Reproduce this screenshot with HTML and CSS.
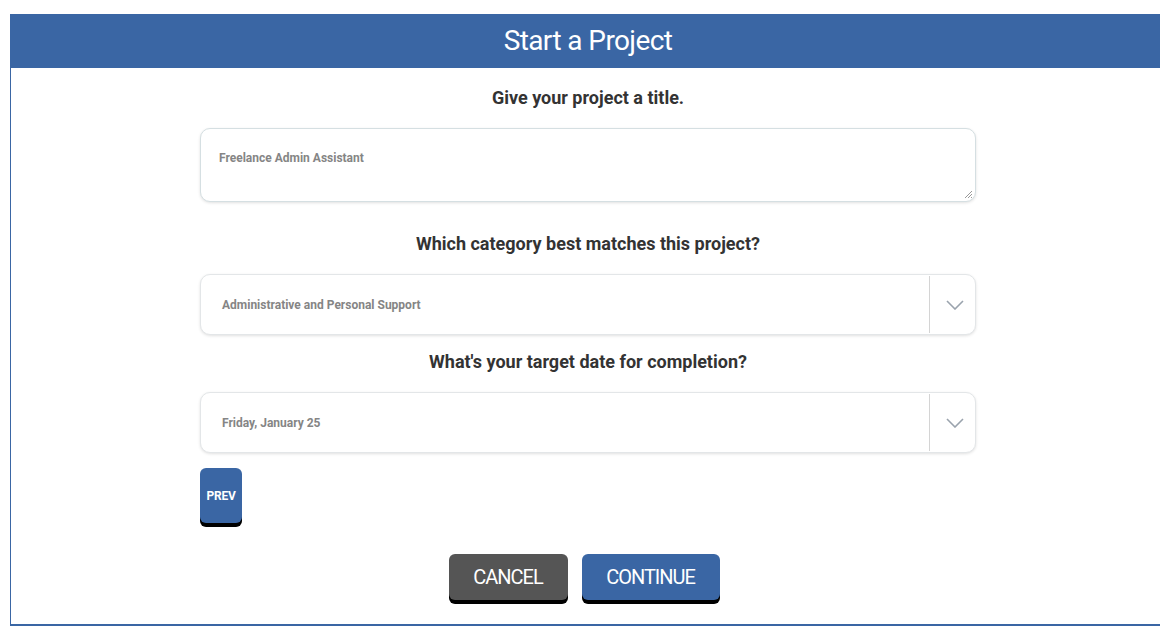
FILE: index.html
```html
<!DOCTYPE html>
<html lang="en">
<head>
<title>Start a Project</title>
<meta charset="utf-8">
<link rel="stylesheet" href="styles.css">
</head>
<body>
	<div class="card">
		<h1 class="card_head">Start a Project</h1>

		<form class="project_form">
			<label class="q">Give your project a title.</label>
			<div class="field area">
				<span class="val">Freelance Admin Assistant</span>
				<svg class="grip" width="10" height="10" viewBox="0 0 10 10">
					<path d="M9 2 L2 9 M9 5 L5 9 M9 8 L8 9" stroke="#999" stroke-width="1" fill="none"/>
				</svg>
			</div>

			<label class="q">Which category best matches this project?</label>
			<div class="field pick">
				<span class="val">Administrative and Personal Support</span>
				<span class="arrow">
					<svg width="18" height="10" viewBox="0 0 18 10"><path d="M1 1 L9 9 L17 1" stroke="#9aa3ad" stroke-width="1.6" fill="none"/></svg>
				</span>
			</div>

			<label class="q">What's your target date for completion?</label>
			<div class="field pick">
				<span class="val">Friday, January 25</span>
				<span class="arrow">
					<svg width="18" height="10" viewBox="0 0 18 10"><path d="M1 1 L9 9 L17 1" stroke="#9aa3ad" stroke-width="1.6" fill="none"/></svg>
				</span>
			</div>

			<div class="prev_row"><button type="button" class="btn prev">PREV</button></div>

			<div class="actions">
				<button type="button" class="btn big cancel">CANCEL</button>
				<button type="button" class="btn big go">CONTINUE</button>
			</div>
		</form>
	</div>
</body>
</html>
```

FILE: styles.css
```css
body{
	margin: 0;
	background: #ffffff;
	overflow: hidden;
	font-family: Roboto, "DejaVu Sans Condensed", sans-serif;
	color: #333;
}
.card{
	margin: 14px 0 0 10px;
	width: 1155px;
	height: 612px;
	box-sizing: border-box;
	border-left: 1px solid #3a66a4;
	border-bottom: 2px solid #3a66a4;
}
.card_head{
	margin: 0;
	height: 54px;
	line-height: 54px;
	background: #3a66a4;
	color: #fff;
	text-align: center;
	font-weight: normal;
	font-size: 28px;
	letter-spacing: -0.6px;
}
.project_form{
	width: 776px;
	margin: 0 auto;
	display: flex;
	flex-direction: column;
}
.q{
	display: block;
	text-align: center;
	font-weight: bold;
	font-size: 18px;
	letter-spacing: 0;
	color: #333;
}
.q:first-child{ margin-top: 19px; }
.field{
	position: relative;
	background: #fff;
	border: 1px solid #e3e6e8;
	border-radius: 10px;
	box-shadow: 0 1px 3px rgba(0,0,0,0.12);
	box-sizing: border-box;
	font-size: 12px;
	font-weight: bold;
	color: #858585;
}
.area{
	height: 74px;
	margin: 20px 0 31px 0;
	padding: 22px 18px;
	border-color: #d5dfe2;
}
.grip{ position: absolute; right: 2px; bottom: 2px; }
.pick{
	height: 61px;
	display: flex;
	align-items: center;
	padding-left: 21px;
	margin: 20px 0 16px 0;
}
.pick .val{ flex: 1; }
.arrow{
	width: 45px;
	height: 57px;
	border-left: 1px solid #d4d4d4;
	display: flex;
	align-items: center;
	justify-content: center;
}
.arrow svg{ margin-left: 4px; }
.pick:last-of-type{ margin-bottom: 14px; }
.btn{
	border: none;
	color: #fff;
	font-family: inherit;
	border-radius: 6px;
	box-shadow: 0 4px 0 #000;
	cursor: pointer;
}
.prev_row{ margin-top: -1px; }
.prev{
	width: 42px;
	height: 55px;
	padding: 0;
	background: #3a66a4;
	font-size: 12px;
	font-weight: bold;
	letter-spacing: -0.2px;
}
.actions{
	display: flex;
	justify-content: center;
	gap: 14px;
	margin-top: 31px;
	padding-right: 8px;
}
.big{
	height: 46px;
	font-size: 20px;
	font-weight: normal;
	letter-spacing: -1px;
	padding: 0;
}
.cancel{ background: #555555; width: 119px; }
.go{ background: #3a66a4; width: 138px; }
```
